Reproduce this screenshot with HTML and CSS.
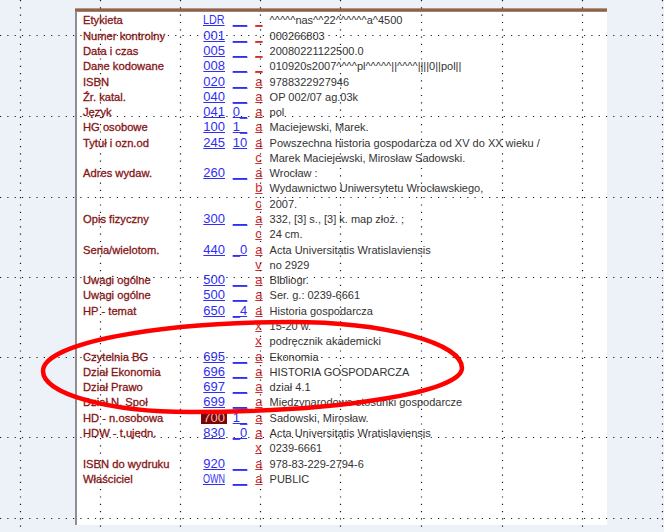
FILE: index.html
```html
<!DOCTYPE html>
<html lang="pl">
<head>
<meta charset="utf-8">
<title>Rekord MARC</title>
<link rel="stylesheet" href="styles.css">
</head>
<body>
<div class="page">
  <div class="panel">
    <div class="panel-top"></div>
    <div class="panel-body">
      <div class="row"><span class="lbl">Etykieta</span><a class="tag narrow-ldr">LDR</a><a class="ind">__</a><a class="sf">_</a><span class="val">^^^^^nas^^22^^^^^^a^4500</span></div>
      <div class="row"><span class="lbl">Numer kontrolny</span><a class="tag">001</a><a class="ind">__</a><a class="sf">_</a><span class="val">000266803</span></div>
      <div class="row"><span class="lbl">Data i czas</span><a class="tag">005</a><a class="ind">__</a><a class="sf">_</a><span class="val">20080221122500.0</span></div>
      <div class="row"><span class="lbl">Dane kodowane</span><a class="tag">008</a><a class="ind">__</a><a class="sf">_</a><span class="val">010920s2007^^^^pl^^^^^||^^^^||||0||pol||</span></div>
      <div class="row"><span class="lbl">ISBN</span><a class="tag">020</a><a class="ind">__</a><a class="sf">a</a><span class="val">9788322927946</span></div>
      <div class="row"><span class="lbl">Źr. katal.</span><a class="tag">040</a><a class="ind">__</a><a class="sf">a</a><span class="val">OP 002/07 ag.03k</span></div>
      <div class="row"><span class="lbl">Język</span><a class="tag">041</a><a class="ind">0_</a><a class="sf">a</a><span class="val">pol</span></div>
      <div class="row"><span class="lbl">HG osobowe</span><a class="tag">100</a><a class="ind">1_</a><a class="sf">a</a><span class="val">Maciejewski, Marek.</span></div>
      <div class="row"><span class="lbl">Tytuł i ozn.od</span><a class="tag">245</a><a class="ind">10</a><a class="sf">a</a><span class="val">Powszechna historia gospodarcza od XV do XX wieku /</span></div>
      <div class="row"><span></span><span></span><span></span><a class="sf">c</a><span class="val">Marek Maciejewski, Mirosław Sadowski.</span></div>
      <div class="row"><span class="lbl">Adres wydaw.</span><a class="tag">260</a><a class="ind">__</a><a class="sf">a</a><span class="val">Wrocław :</span></div>
      <div class="row"><span></span><span></span><span></span><a class="sf">b</a><span class="val">Wydawnictwo Uniwersytetu Wrocławskiego,</span></div>
      <div class="row"><span></span><span></span><span></span><a class="sf">c</a><span class="val">2007.</span></div>
      <div class="row"><span class="lbl">Opis fizyczny</span><a class="tag">300</a><a class="ind">__</a><a class="sf">a</a><span class="val">332, [3] s., [3] k. map złoż. ;</span></div>
      <div class="row"><span></span><span></span><span></span><a class="sf">c</a><span class="val">24 cm.</span></div>
      <div class="row"><span class="lbl">Seria/wielotom.</span><a class="tag">440</a><a class="ind">_0</a><a class="sf">a</a><span class="val">Acta Universitatis Wratislaviensis</span></div>
      <div class="row"><span></span><span></span><span></span><a class="sf">v</a><span class="val">no 2929</span></div>
      <div class="row"><span class="lbl">Uwagi ogólne</span><a class="tag">500</a><a class="ind">__</a><a class="sf">a</a><span class="val">Bibliogr.</span></div>
      <div class="row"><span class="lbl">Uwagi ogólne</span><a class="tag">500</a><a class="ind">__</a><a class="sf">a</a><span class="val">Ser. g.: 0239-6661</span></div>
      <div class="row"><span class="lbl">HP - temat</span><a class="tag">650</a><a class="ind">_4</a><a class="sf">a</a><span class="val">Historia gospodarcza</span></div>
      <div class="row"><span></span><span></span><span></span><a class="sf">x</a><span class="val">15-20 w.</span></div>
      <div class="row"><span></span><span></span><span></span><a class="sf">x</a><span class="val">podręcznik akademicki</span></div>
      <div class="row"><span class="lbl">Czytelnia BG</span><a class="tag">695</a><a class="ind">__</a><a class="sf">a</a><span class="val">Ekonomia</span></div>
      <div class="row"><span class="lbl">Dział Ekonomia</span><a class="tag">696</a><a class="ind">__</a><a class="sf">a</a><span class="val">HISTORIA GOSPODARCZA</span></div>
      <div class="row"><span class="lbl">Dział Prawo</span><a class="tag">697</a><a class="ind">__</a><a class="sf">a</a><span class="val">dział 4.1</span></div>
      <div class="row"><span class="lbl">Dział N. Społ</span><a class="tag">699</a><a class="ind">__</a><a class="sf">a</a><span class="val">Międzynarodowe stosunki gospodarcze</span></div>
      <div class="row"><span class="lbl">HD - n.osobowa</span><a class="tag current">700</a><a class="ind">1_</a><a class="sf">a</a><span class="val">Sadowski, Mirosław.</span></div>
      <div class="row"><span class="lbl">HDW - t.ujedn.</span><a class="tag">830</a><a class="ind">_0</a><a class="sf">a</a><span class="val">Acta Universitatis Wratislaviensis</span></div>
      <div class="row"><span></span><span></span><span></span><a class="sf">x</a><span class="val">0239-6661</span></div>
      <div class="row"><span class="lbl">ISBN do wydruku</span><a class="tag">920</a><a class="ind">__</a><a class="sf">a</a><span class="val">978-83-229-2794-6</span></div>
      <div class="row"><span class="lbl">Właściciel</span><a class="tag narrow-own">OWN</a><a class="ind">__</a><a class="sf">a</a><span class="val">PUBLIC</span></div>
    </div>
  </div>
</div>
<svg class="overlay" width="664" height="532" viewBox="0 0 664 532" aria-hidden="true">
  <g class="grid">
    <line x1="20.5" y1="0" x2="20.5" y2="532"/>
    <line x1="100.5" y1="0" x2="100.5" y2="532"/>
    <line x1="180.5" y1="0" x2="180.5" y2="532"/>
    <line x1="260.5" y1="0" x2="260.5" y2="532"/>
    <line x1="340.5" y1="0" x2="340.5" y2="532"/>
    <line x1="421.5" y1="0" x2="421.5" y2="532"/>
    <line x1="502.5" y1="0" x2="502.5" y2="532"/>
    <line x1="582.5" y1="0" x2="582.5" y2="532"/>
    <line x1="662.5" y1="0" x2="662.5" y2="532"/>
    <line x1="0" y1="35.5" x2="664" y2="35.5"/>
    <line x1="0" y1="116.5" x2="664" y2="116.5"/>
    <line x1="0" y1="197.5" x2="664" y2="197.5"/>
    <line x1="0" y1="277.5" x2="664" y2="277.5"/>
    <line x1="0" y1="357.5" x2="664" y2="357.5"/>
    <line x1="0" y1="437.5" x2="664" y2="437.5"/>
    <line x1="0" y1="518.5" x2="664" y2="518.5"/>
  </g>
  <path class="ring" d="M43,371 C43,344 154,322 290,322 C385,322 462,343 462,368 C462,392 340,412 190,412 C109,412 43,394 43,371 Z"/>
</svg>
</body>
</html>
```
FILE: styles.css
```css
html, body {
  margin: 0;
  padding: 0;
}

body {
  width: 664px;
  height: 532px;
  overflow: hidden;
  position: relative;
  background: #edf1f8;
  font-family: "Liberation Sans", Arial, sans-serif;
}

.page {
  padding: 8px 0 0 75px;
}

.panel {
  width: 532px;
  height: 517px;
  background: #ffffff;
}

.panel-top {
  height: 4px;
  background: linear-gradient(#9d9d9d 0 1px, #a95a34 1px 3px, #8a8a8a 3px 4px);
}

.panel-body {
  box-sizing: border-box;
  height: 513px;
  border-left: 2px solid #8f8f8f;
  padding: 0.4px 0 0 6px;
}

.row {
  display: grid;
  grid-template-columns: 120.3px 29.4px 22.6px 14.3px auto;
  align-items: baseline;
  height: 15.29px;
  line-height: 15.29px;
  white-space: nowrap;
}

.lbl {
  font-size: 11.2px;
  color: #851515;
  -webkit-text-stroke: 0.3px #851515;
}

.tag,
.ind {
  font-size: 13px;
  color: #2f2ff2;
  text-decoration: underline;
}

.narrow-ldr {
  transform: scaleX(0.83);
  transform-origin: left center;
}

.narrow-own {
  transform: scaleX(0.69);
  transform-origin: left center;
}

.current {
  justify-self: start;
  margin-left: -2px;
  padding: 0 2px;
  line-height: 13px;
  background: #7a0505;
  color: #f3b8b8;
  text-decoration: none;
}

.sf {
  font-size: 13px;
  color: #cf2b2b;
  text-decoration: underline;
}

.val {
  font-size: 11px;
  color: #333333;
}

.overlay {
  position: absolute;
  top: 0;
  left: 0;
  pointer-events: none;
}

.grid line {
  stroke: #1e1e1e;
  stroke-width: 1.2;
  stroke-dasharray: 1.2 6.1;
}

.ring {
  fill: none;
  stroke: #ff0000;
  stroke-width: 4.5;
}
```
